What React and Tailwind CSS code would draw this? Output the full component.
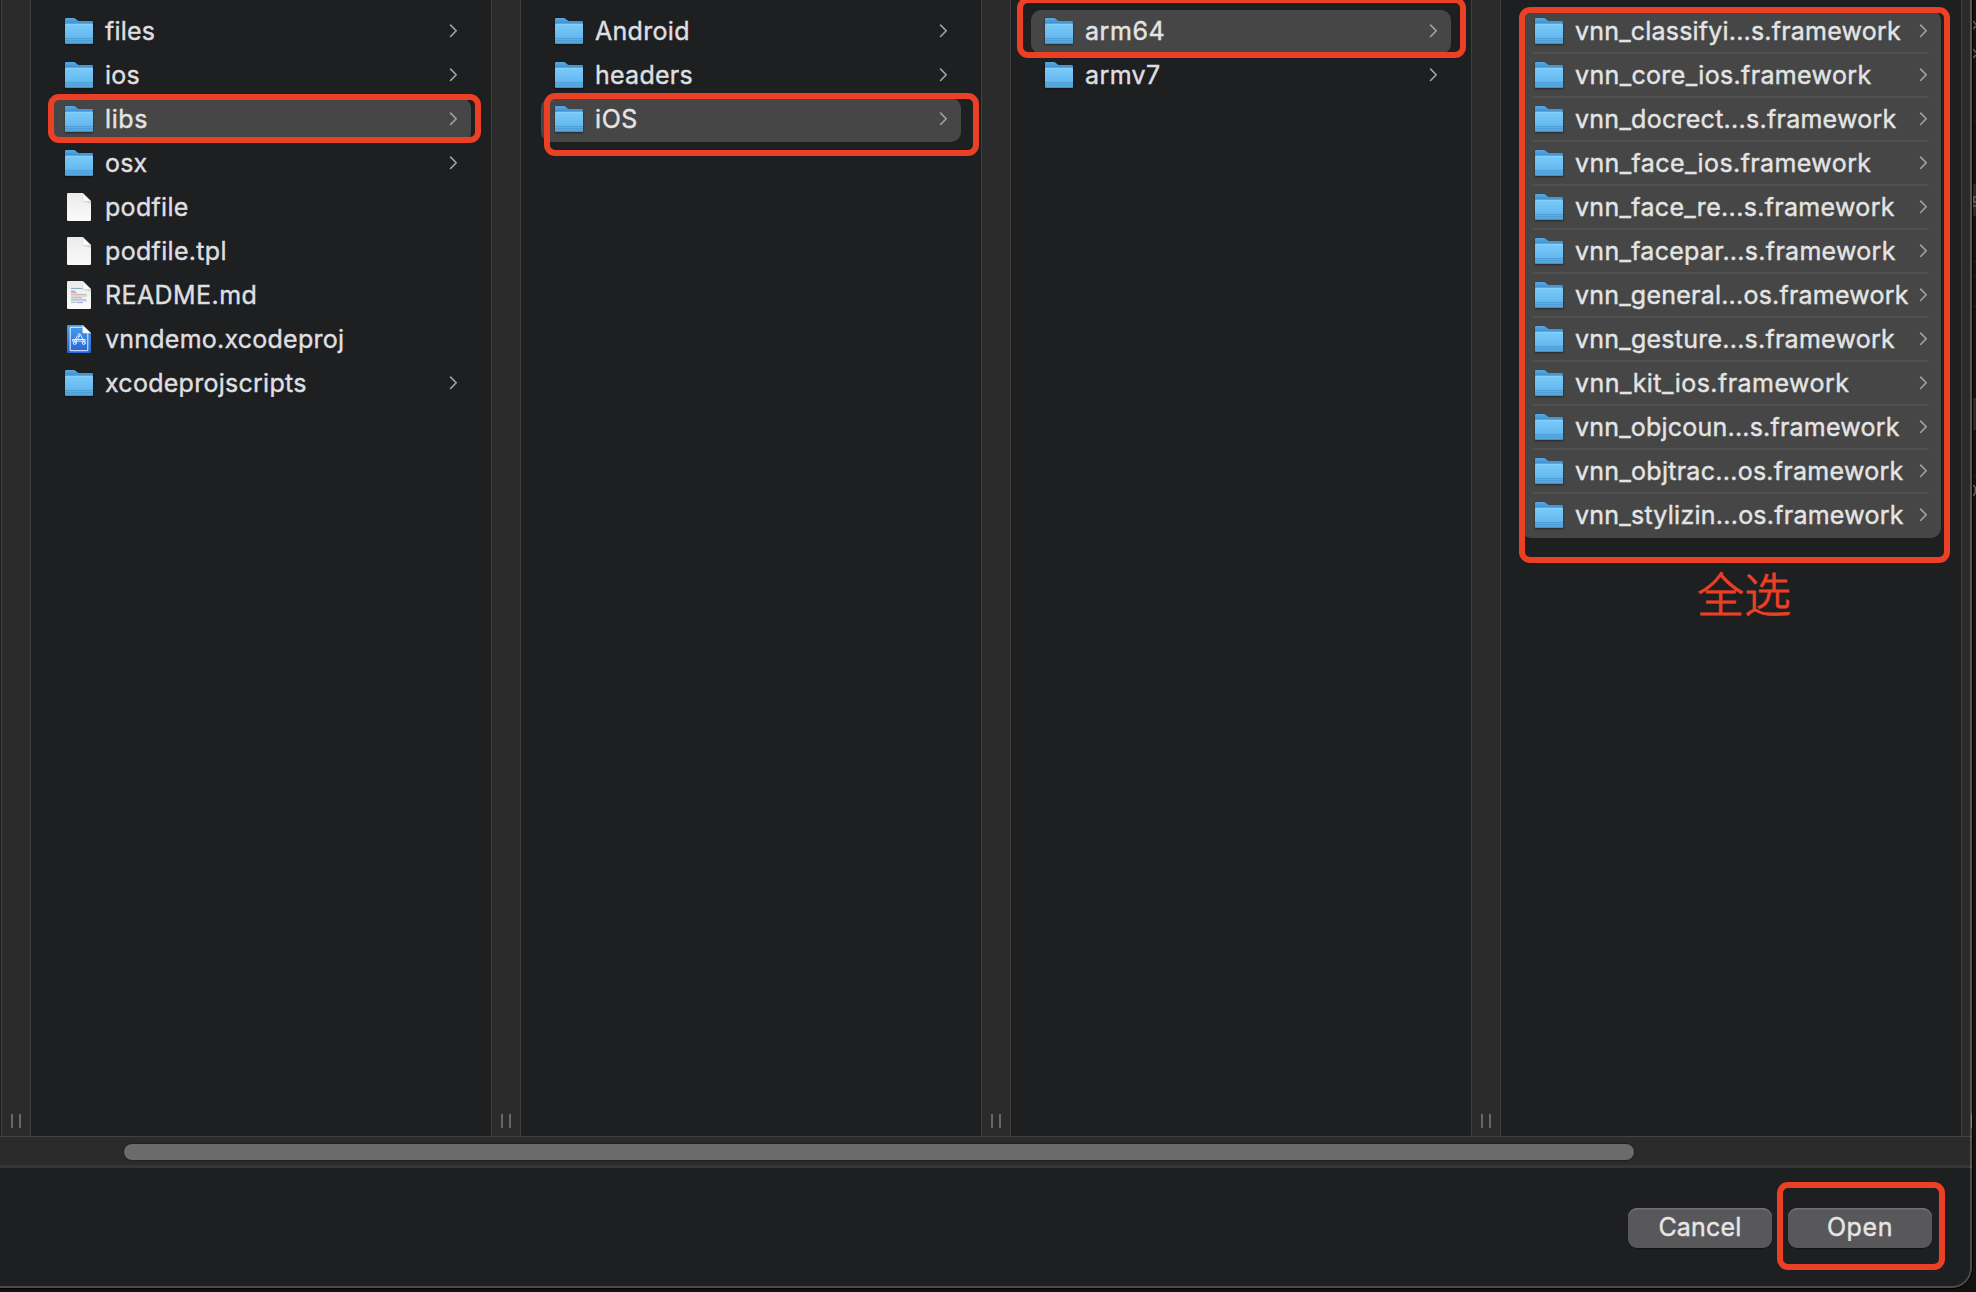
import React from 'react';

const COLUMNS = [
  {
    rows: [
      { name: 'files', kind: 'folder', tracking: 'tracking-[0.2px]' },
      { name: 'ios', kind: 'folder', tracking: 'tracking-[0.2px]' },
      { name: 'libs', kind: 'folder', tracking: 'tracking-[0.6px]', selected: true },
      { name: 'osx', kind: 'folder', tracking: 'tracking-[0.2px]' },
      { name: 'podfile', kind: 'file', tracking: 'tracking-[0.3px]' },
      { name: 'podfile.tpl', kind: 'file', tracking: 'tracking-[0.32px]' },
      { name: 'README.md', kind: 'markdown', tracking: 'tracking-[0.42px]' },
      { name: 'vnndemo.xcodeproj', kind: 'xcode', tracking: 'tracking-[0.24px]' },
      { name: 'xcodeprojscripts', kind: 'folder', tracking: 'tracking-[0.27px]' },
    ],
  },
  {
    rows: [
      { name: 'Android', kind: 'folder', tracking: 'tracking-[0.3px]' },
      { name: 'headers', kind: 'folder', tracking: 'tracking-[0.25px]' },
      { name: 'iOS', kind: 'folder', tracking: 'tracking-[0.6px]', selected: true },
    ],
  },
  {
    rows: [
      { name: 'arm64', kind: 'folder', tracking: 'tracking-[0.55px]', selected: true },
      { name: 'armv7', kind: 'folder', tracking: 'tracking-[0.4px]' },
    ],
  },
];

const FRAMEWORKS = [
  { name: 'vnn_classifyi...s.framework', tracking: 'tracking-[0.2px]' },
  { name: 'vnn_core_ios.framework', tracking: 'tracking-[0.35px]' },
  { name: 'vnn_docrect...s.framework', tracking: 'tracking-[0.27px]' },
  { name: 'vnn_face_ios.framework', tracking: 'tracking-[0.4px]' },
  { name: 'vnn_face_re...s.framework', tracking: 'tracking-[0.32px]' },
  { name: 'vnn_facepar...s.framework', tracking: 'tracking-[0.29px]' },
  { name: 'vnn_general...os.framework', tracking: 'tracking-[0.22px]' },
  { name: 'vnn_gesture...s.framework', tracking: 'tracking-[0.24px]' },
  { name: 'vnn_kit_ios.framework', tracking: 'tracking-[0.46px]' },
  { name: 'vnn_objcoun...s.framework', tracking: 'tracking-[0.21px]' },
  { name: 'vnn_objtrac...os.framework', tracking: 'tracking-[0.27px]' },
  { name: 'vnn_stylizin...os.framework', tracking: 'tracking-[0.25px]' },
];

function FolderIcon() {
  return (
    <svg width="28" height="27" viewBox="0 0 28 27" className="mt-px drop-shadow-[0_1px_1px_rgba(0,0,0,0.45)]">
      <path d="M0 1.2Q0 0 1.2 0H8.8Q9.8 0 10.6 0.7L12.3 2.2Q13.2 3 14.4 3H26.8Q28 3 28 4.2V12H0Z" fill="url(#folderBack)" />
      <path d="M0 6.8Q0 5.8 1 5.8H27Q28 5.8 28 6.8V24.8Q28 26 26.8 26H1.2Q0 26 0 24.8Z" fill="url(#folderFront)" />
      <path d="M0.8 6.3H27.2" stroke="#8ad4fb" strokeWidth="0.8" />
      <path d="M0 20.6H28M0 22.8H28" stroke="#4796cd" strokeWidth="0.8" />
      <path d="M0.5 25.6H27.5" stroke="#3d86bb" strokeWidth="0.8" />
    </svg>
  );
}

function PageShape({ fill }) {
  return (
    <>
      <path d="M3.3 0H17.5L26 8.3V26.7Q26 28 24.7 28H3.3Q2 28 2 26.7V1.3Q2 0 3.3 0Z" fill={fill} />
      <path d="M17.8 2L26 8.3V11L17.8 8.6Z" fill="#000" opacity="0.1" />
      <path d="M17.6 0L26 8.3H18.9Q17.6 8.3 17.6 7Z" fill="#fdfdfd" stroke="#c4c4c4" strokeWidth="0.4" />
    </>
  );
}

function FileIcon() {
  return (
    <svg width="28" height="28" viewBox="0 0 28 28">
      <PageShape fill="url(#paper)" />
    </svg>
  );
}

function MarkdownIcon() {
  return (
    <svg width="28" height="28" viewBox="0 0 28 28">
      <PageShape fill="url(#paper)" />
      <g strokeWidth="0.9" opacity="0.8">
        <path d="M6 7.4H17.5" stroke="#3f9c9c" />
        <path d="M6 10.2H10" stroke="#c2468f" />
        <path d="M6 11.7H12" stroke="#d46a8a" />
        <path d="M6 13.4H21.5M6 15H22" stroke="#a9a9ae" />
        <path d="M6 16.8H17" stroke="#9a86c8" />
        <path d="M6 18.4H21M6 19.8H22" stroke="#a9a9ae" />
        <path d="M6 21.6H10.5" stroke="#8ab5a0" />
        <path d="M11.5 21.6H18" stroke="#7a7be0" />
      </g>
    </svg>
  );
}

function XcodeIcon() {
  return (
    <svg width="28" height="28" viewBox="0 0 28 28">
      <PageShape fill="url(#xcodeBlue)" />
      <path d="M17.6 2.3H5.2V25.7H22.8V8.3" fill="none" stroke="#e8f2fd" strokeWidth="1" />
      <g fill="none" stroke="#e3effc" strokeWidth="1" strokeLinecap="round">
        <path d="M13.2 8.8L15.3 9.2L18.9 17.2M15.3 9.2L13.6 11.6" />
        <path d="M14.4 11.4L10.3 17.4M12.6 10.6L9 16.6" />
        <path d="M8 14.5H20.2V16.2H8Z" />
        <circle cx="9.8" cy="18" r="1.5" />
        <circle cx="18.8" cy="18" r="1.5" />
      </g>
    </svg>
  );
}

const ICONS = { folder: FolderIcon, file: FileIcon, markdown: MarkdownIcon, xcode: XcodeIcon };

function Chevron() {
  return (
    <svg width="8" height="14" viewBox="0 0 8 14" className="-mt-px shrink-0">
      <path d="M1.6 1.1L7.2 6.8L1.6 12.5" fill="none" stroke="#a3a3a4" strokeWidth="1.6" strokeLinecap="round" strokeLinejoin="round" />
    </svg>
  );
}

function Row({ name, kind, tracking, selected, divided, grouped }) {
  const Icon = ICONS[kind];
  return (
    <li className={`h-11 px-3 ${selected ? 'rounded-[10px] bg-[#464646]' : ''}`}>
      <div className={`flex h-11 items-center border-b-2 px-0.5 ${divided ? 'border-[#505050]' : 'border-transparent'}`}>
        <span className="flex w-7 shrink-0 justify-center">
          <Icon />
        </span>
        <span className={`ml-3 flex-1 whitespace-nowrap ${tracking} ${selected || grouped ? 'text-[#e4e4e4]' : 'text-[#dfdfe0]'}`}>
          {name}
        </span>
        {kind === 'folder' && <Chevron />}
      </div>
    </li>
  );
}

function Gutter() {
  return (
    <div className="flex w-[30px] shrink-0 items-end gap-1.5 border-x border-[#3f3f40] bg-[#2b2b2b] pb-2 pl-[9px]">
      <span className="h-3.5 w-0.5 bg-[#676767]" />
      <span className="h-3.5 w-0.5 bg-[#676767]" />
    </div>
  );
}

function Button({ children, tracking }) {
  return (
    <button
      className={`h-10 w-36 rounded-[9px] bg-[#58585a] pb-0.5 text-[#e6e6e6] shadow-[inset_0_1.5px_0_#717173,0_1px_1px_rgba(0,0,0,0.4)] ${tracking}`}
    >
      {children}
    </button>
  );
}

function Marker({ className }) {
  return <div className={`pointer-events-none absolute rounded-[11px] border-6 border-[#ec4026] ${className}`} />;
}

function Gradients() {
  return (
    <svg width="0" height="0" className="absolute">
      <defs>
        <linearGradient id="folderBack" x1="0" y1="0" x2="0" y2="1">
          <stop offset="0" stopColor="#58aae4" />
          <stop offset="0.5" stopColor="#3d8ccd" />
        </linearGradient>
        <linearGradient id="folderFront" x1="0" y1="0" x2="0" y2="1">
          <stop offset="0" stopColor="#7bcbf8" />
          <stop offset="0.65" stopColor="#65b9f0" />
          <stop offset="1" stopColor="#50a3dc" />
        </linearGradient>
        <linearGradient id="paper" x1="0" y1="0" x2="0" y2="1">
          <stop offset="0" stopColor="#ebebeb" />
          <stop offset="1" stopColor="#fafafa" />
        </linearGradient>
        <linearGradient id="xcodeBlue" x1="0" y1="0" x2="0" y2="1">
          <stop offset="0" stopColor="#46a0e8" />
          <stop offset="1" stopColor="#2a62d8" />
        </linearGradient>
      </defs>
    </svg>
  );
}

function BackdropEdge() {
  return (
    <svg width="3" height="560" viewBox="0 0 3 560" className="absolute left-[1973px] top-0">
      <path d="M0 184H3V216H0ZM0 398H3V430H0Z" fill="#2a2a2b" />
      <path d="M0 121.5H3M0 261.5H3M0 276.5H3M0 306.5H3M0 475.5H3" stroke="#242424" />
      <path
        d="M0 21L3 24.5M0 29L3 26M0 49L3 52.5M0 58L3 55M3 197H0.6V202H3M3 206H0M0 485L2.3 487.5V493L0 496"
        fill="none"
        stroke="#666"
        strokeWidth="1.4"
      />
    </svg>
  );
}

export default function App() {
  return (
    <div className="relative h-[1292px] w-[1976px] overflow-hidden bg-[#121213] font-['Inter','Noto_Sans_CJK_SC',sans-serif] text-[25px] leading-none [-webkit-text-stroke:0.4px]">
      <Gradients />
      <div className="relative flex h-[1288px] w-[1972px] flex-col overflow-hidden rounded-br-[20px] bg-[#1e1f21] shadow-[0_0_0_1px_#000]">
        <main className="flex h-[1136px] shrink-0 overflow-hidden pl-px">
          {COLUMNS.map((column) => (
            <React.Fragment key={column.rows[0].name}>
              <Gutter />
              <ul className="w-[460px] shrink-0 px-5 pt-2.5">
                {column.rows.map((row) => (
                  <Row key={row.name} {...row} />
                ))}
              </ul>
            </React.Fragment>
          ))}
          <Gutter />
          <div className="w-[460px] shrink-0 px-5 pt-2.5">
            <ul className="rounded-[10px] bg-[#464646]">
              {FRAMEWORKS.map((row, i) => (
                <Row key={row.name} {...row} kind="folder" grouped divided={i < FRAMEWORKS.length - 1} />
              ))}
            </ul>
            <p className="mt-[30px] pl-44 font-['Noto_Sans_CJK_SC',sans-serif] text-[47px] font-light leading-[48px] text-[#ec4026] [-webkit-text-stroke:0.9px]">
              全选
            </p>
          </div>
          <Gutter />
        </main>
        <div className="h-8 shrink-0 border-b-[3px] border-t border-b-[#343537] border-t-[#424242] bg-[#2b2b2b] pl-[124px] pt-[7px]">
          <div className="h-4 w-[1510px] rounded-full bg-[#6b6b6b] shadow-[0_0_1px_1px_rgba(0,0,0,0.25)]" />
        </div>
        <footer className="flex flex-1 items-start justify-end gap-4 pr-10 pt-10">
          <Button tracking="tracking-[0.2px]">Cancel</Button>
          <Button tracking="tracking-[0.6px]">Open</Button>
        </footer>
        <div className="pointer-events-none absolute inset-0 rounded-br-[20px] border-b-2 border-r-2 border-white/20" />
      </div>
      <BackdropEdge />
      <Marker className="left-12 top-[94px] h-[49px] w-[433px]" />
      <Marker className="left-[544px] top-[93px] h-[63px] w-[435px]" />
      <Marker className="-top-[3px] left-[1017px] h-[61px] w-[449px]" />
      <Marker className="left-[1519px] top-[7px] h-[556px] w-[431px]" />
      <Marker className="left-[1777px] top-[1182px] h-[88px] w-[168px]" />
    </div>
  );
}
